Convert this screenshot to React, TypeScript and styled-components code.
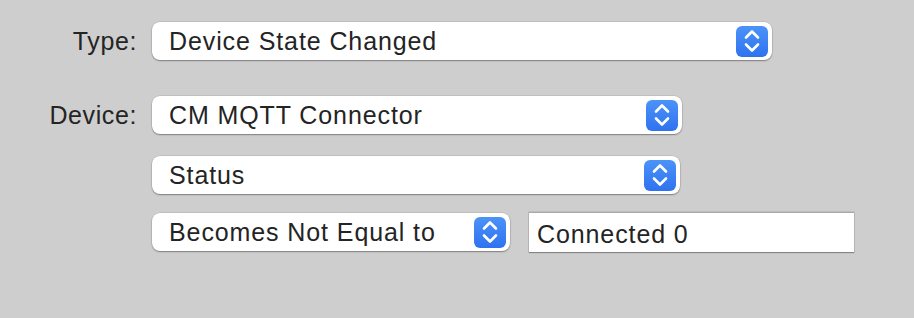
import React from 'react';
import styled, { createGlobalStyle } from 'styled-components';

const Global = createGlobalStyle`
    html, body {
        margin: 0;
        padding: 0;
        background: #cecece;
    }
`;

const Page = styled.div`
    width: 914px;
    height: 318px;
    background: #cecece;
    font-family: "Helvetica Neue", "Liberation Sans", Arial, sans-serif;
    color: #242424;
    padding: 22px 0 0 0;
    box-sizing: border-box;
    display: flex;
    flex-direction: column;
    font-size: 25px;
    letter-spacing: 0.9px;
`;

type RowProps = {
    gap: number
};

const Row = styled.div`
    display: flex;
    align-items: center;
    margin-top: ${(props: RowProps) => props.gap}px;
`;

const Label = styled.div`
    width: 137px;
    padding-right: 15px;
    text-align: right;
    box-sizing: content-box;
    letter-spacing: 0.6px;
`;

const Indent = styled.div`
    width: 152px;
    flex: none;
`;

type PopupProps = {
    width: number
};

const Popup = styled.div`
    width: ${(props: PopupProps) => props.width}px;
    height: 38px;
    box-sizing: border-box;
    background: #fff;
    border-radius: 8px;
    box-shadow: 0 1px 1.5px rgba(0, 0, 0, 0.35), 0 0 0 0.5px rgba(0, 0, 0, 0.12);
    display: flex;
    align-items: center;
    justify-content: space-between;
    padding: 0 4px 0 17px;
`;

const Stepper = styled.div`
    width: 32px;
    height: 31px;
    border-radius: 6px;
    background: linear-gradient(#4b93f8, #2f72f0);
    display: flex;
    align-items: center;
    justify-content: center;
`;

const TextField = styled.div`
    width: 325px;
    height: 40px;
    margin-left: 19px;
    box-sizing: border-box;
    background: #fff;
    border-top: 1px solid #a8a8a8;
    box-shadow: 0 1px 1px rgba(0, 0, 0, 0.3), 0 0 0 0.5px rgba(0, 0, 0, 0.15);
    display: flex;
    align-items: center;
    padding: 3px 0 0 8px;
`;

const Arrows = () => (
    <svg width="16" height="24" viewBox="0 0 16 24">
        <path d="M2 8.5 L8 2.5 L14 8.5 M2 15.5 L8 21.5 L14 15.5" fill="none" stroke="#fff" strokeWidth="2.6" strokeLinecap="round" strokeLinejoin="round" />
    </svg>
);

const Select = ({ width, value }: { width: number, value: string }) => (
    <Popup width={width}>
        <span>{value}</span>
        <Stepper><Arrows /></Stepper>
    </Popup>
);

export default function App() {
    return (<>
        <Global />
        <Page>
            <Row gap={0}>
                <Label>Type:</Label>
                <Select width={620} value="Device State Changed" />
            </Row>
            <Row gap={36}>
                <Label>Device:</Label>
                <Select width={530} value="CM MQTT Connector" />
            </Row>
            <Row gap={22}>
                <Indent />
                <Select width={528} value="Status" />
            </Row>
            <Row gap={18}>
                <Indent />
                <Select width={358} value="Becomes Not Equal to" />
                <TextField>Connected 0</TextField>
            </Row>
        </Page>
    </>);
}
